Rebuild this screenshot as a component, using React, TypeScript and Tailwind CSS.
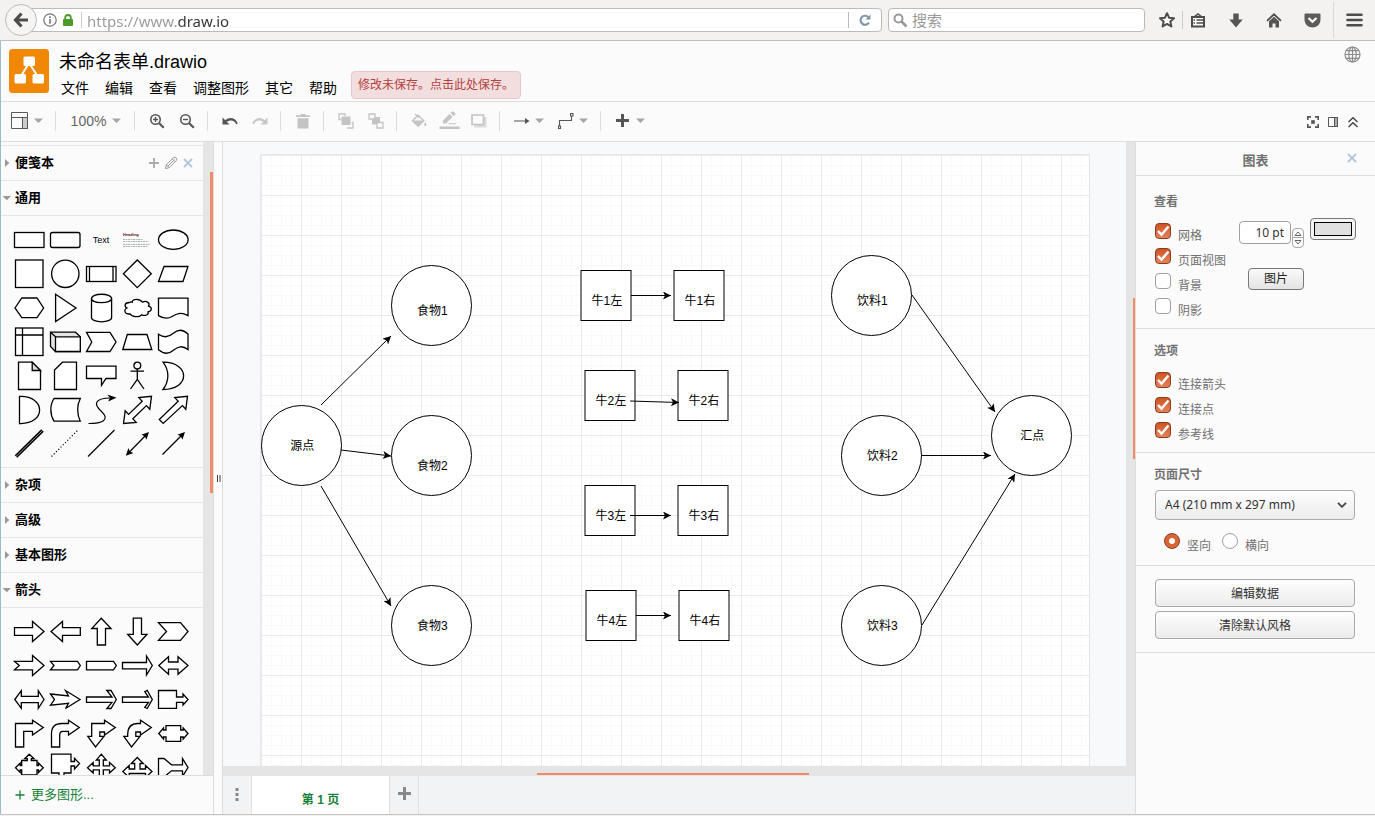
import type { ReactNode } from "react";

const SHAPE = { fill: "#fff", stroke: "#000", strokeWidth: 1.3 } as const;

type ShapeDef = { name: string; art: ReactNode };

const poly = (name: string, points: string): ShapeDef => ({
  name,
  art: <polygon points={points} {...SHAPE} />,
});
const path = (name: string, d: string): ShapeDef => ({ name, art: <path d={d} {...SHAPE} /> });

const generalShapes: ShapeDef[] = [
  { name: "矩形", art: <rect x="3.5" y="9.5" width="29.5" height="15" {...SHAPE} /> },
  { name: "圆角矩形", art: <rect x="3.5" y="9.5" width="29.5" height="15" rx="2" {...SHAPE} /> },
  {
    name: "文本",
    art: (
      <text x="18" y="20" textAnchor="middle" fontSize="9" fill="#000">
        Text
      </text>
    ),
  },
  {
    name: "标题",
    art: (
      <g>
        <text x="4" y="12.5" fontSize="4" fontWeight="bold" fill="#5a1010">
          Heading
        </text>
        <g stroke="#75857e" strokeWidth="0.6" strokeDasharray="2.4 0.7 1.4 0.5">
          <path d="M4 16.5H24" />
          <path d="M4 18.5H29.5" />
          <path d="M4 21.5H30.5" />
          <path d="M4 23.5H29" />
        </g>
      </g>
    ),
  },
  { name: "椭圆", art: <ellipse cx="18.3" cy="16.7" rx="14.8" ry="9.7" {...SHAPE} /> },
  { name: "正方形", art: <rect x="4.5" y="3" width="27.5" height="27.5" {...SHAPE} /> },
  { name: "圆形", art: <circle cx="18.3" cy="16.8" r="13.7" {...SHAPE} /> },
  {
    name: "过程",
    art: (
      <g {...SHAPE}>
        <rect x="3.5" y="9.5" width="29.5" height="15" />
        <path d="M6.5 9.5V24.5M30 9.5V24.5" />
      </g>
    ),
  },
  poly("菱形", "18.3,3 32.3,16.8 18.3,30.6 4.4,16.8"),
  poly("平行四边形", "9,9.5 33,9.5 28,24.5 3.5,24.5"),
  poly("六边形", "4,17 10.8,7 26,7 32.6,17 26,26.6 10.8,26.6"),
  poly("三角形", "8.6,3.2 29,17 8.6,30.5"),
  {
    name: "圆柱体",
    art: (
      <g {...SHAPE}>
        <path d="M8.5 7.5C8.5 1.8 28.6 1.8 28.6 7.5V26.5C28.6 32.2 8.5 32.2 8.5 26.5Z" />
        <path d="M8.5 7.5C8.5 13 28.6 13 28.6 7.5" fill="none" />
      </g>
    ),
  },
  path(
    "云",
    "M10.5 11.5C6 11.500 4.500 15 8 17C4 18.500 6 24 11 22.800C13 26.500 20.500 26.500 22.500 23.800C26.500 25.500 30 23.500 29 21C33.500 20 33 16 29.500 15.200C31.500 11.500 27 9.300 23.500 11.200C20.500 7.300 13.500 7.500 13.200 11.200C12.400 10.800 11.300 11 10.500 11.500Z",
  ),
  path("文档", "M3.5 7.200H33V24.600C25.500 20.500 21 23 17.500 25.200C13.500 27.800 8 27.500 3.500 24.600Z"),
  {
    name: "内部存储",
    art: (
      <g {...SHAPE}>
        <rect x="4.5" y="3" width="27.5" height="27.5" />
        <path d="M11.5 3V30.500M4.500 10H32" />
      </g>
    ),
  },
  {
    name: "立方体",
    art: (
      <g {...SHAPE}>
        <path d="M3.500 7.200H28.500L33.300 11.800V26.500H8.500L3.500 21.500Z" fill="#e4e4e4" />
        <path d="M8.500 11.800H33.300V26.500H8.500ZM3.500 7.200L8.500 11.800" />
      </g>
    ),
  },
  poly("步骤", "3.5,7.4 27,7.4 33,17 27,26.5 3.5,26.5 8.8,17"),
  poly("梯形", "3.8,24.5 8.3,9.5 28,9.5 32.8,24.5"),
  path("磁带", "M3.500 9.300C9 13 13.500 12.500 18 8.600C23 4 28 4.200 33 9V24.600C27 20 23 21.500 18 25.500C13.500 29.500 8 28.500 3.500 24.800Z"),
  {
    name: "便签",
    art: (
      <g {...SHAPE}>
        <path d="M7.500 3.200H21.200L29.500 11.500V30.500H7.500Z" />
        <path d="M21.200 3.200V11.500H29.500Z" fill="#ddd" />
      </g>
    ),
  },
  poly("卡片", "15.5,3.2 29.5,3.2 29.5,30.5 7.5,30.5 7.5,11"),
  poly("标注", "3.5,7.2 33,7.2 33,19.5 23,19.5 18.5,26.3 18.5,19.5 3.5,19.5"),
  {
    name: "角色",
    art: (
      <g {...SHAPE} fill="none">
        <circle cx="18.3" cy="6.600" r="3.400" />
        <path d="M18.300 10V20.300M11.500 12.200H25M18.300 20.300L11.500 30M18.300 20.300L25 30" />
      </g>
    ),
  },
  path("或", "M8 3.200C35.500 3.200 35.500 30.500 8 30.500C14.500 22 14.500 11.500 8 3.200Z"),
  path("与", "M8.500 3.500C35.300 2.500 35.300 31.500 8.500 30.500Z"),
  path("数据存储", "M7 5.500H33.300C29.800 12 29.800 21.500 33.300 28.200H7C2.800 21.500 2.800 12 7 5.500Z"),
  {
    name: "曲线",
    art: (
      <g stroke="#000" strokeWidth="1.2">
        <path d="M5.500 30.500C19 30.500 27.500 27 18.500 18.500C10 11 12 5.200 27 5" fill="none" />
        <path d="M32 4.800L26.500 7.200L27.700 4.900L26 2.800Z" />
      </g>
    ),
  },
  poly(
    "双向箭头",
    "32.5,3.3 30.8,16.2 27.4,12.6 13.8,25.8 17.2,29.4 4.5,30.5 6.2,17.8 9.6,21.4 23.2,8.2 19.8,4.600",
  ),
  poly("箭头", "32.500,3.300 30.800,16.200 27.400,12.600 8.200,30.400 4.300,26.500 23.200,8.200 19.800,4.600"),
  {
    name: "链接",
    art: (
      <g>
        <path d="M5 29.500L31.500 3.500" stroke="#000" strokeWidth="3.600" />
        <path d="M5 29.500L31.500 3.500" stroke="#aaa" strokeWidth="0.900" />
      </g>
    ),
  },
  {
    name: "点线",
    art: <path d="M4.500 29.500L31 3" stroke="#000" strokeWidth="1.200" strokeDasharray="1.200 2" />,
  },
  { name: "直线", art: <path d="M5 29.500L31.500 3" stroke="#000" strokeWidth="1.200" /> },
  {
    name: "双向连接线",
    art: (
      <g stroke="#000" strokeWidth="1.200">
        <path d="M9 26.500L28 7" />
        <path d="M29 6L27.300 11L26.300 8.700L24 7.700ZM7.800 27.700L9.500 22.700L10.500 25L12.800 26Z" />
      </g>
    ),
  },
  {
    name: "连接线",
    art: (
      <g stroke="#000" strokeWidth="1.200">
        <path d="M7.500 27.500L28 7" />
        <path d="M29 6L27.300 11L26.300 8.700L24 7.700Z" />
      </g>
    ),
  },
];

const arrowShapes: ShapeDef[] = [
  poly("右箭头", "3.500,12.600 21.500,12.600 21.500,6.500 33,16.500 21.500,26.500 21.500,20.300 3.500,20.300"),
  poly("左箭头", "33.300,12.600 15.500,12.600 15.500,6.500 4,16.500 15.500,26.500 15.500,20.300 33.300,20.300"),
  poly("上箭头", "14.300,30 14.300,13.500 8.700,13.500 18.300,3.200 28,13.500 22.500,13.500 22.500,30"),
  poly("下箭头", "14.300,3.200 14.300,19.300 8.700,19.300 18.300,30 28,19.300 22.500,19.300 22.500,3.200"),
  poly("V形箭头", "3.500,7.600 25.500,7.600 33,16.500 25.500,25.300 3.500,25.300 11.500,16.500"),
  poly("凹口箭头", "3.500,12.300 21.500,12.300 21.500,6.500 33,16.500 21.500,26.500 21.500,20.800 3.500,20.800 8.300,16.500"),
  poly("细V形", "3.500,12.300 30.500,12.300 33.300,16.500 30.500,20.800 3.500,20.800 7,16.500"),
  poly("五边形", "3.500,12.300 30.500,12.300 33.300,16.500 30.500,20.800 3.500,20.800"),
  poly("尖箭头", "3.500,13.500 27.500,13.500 27.500,7 33.300,16.500 27.500,26 27.500,19.800 3.500,19.800"),
  poly("左右箭头", "3.800,16.500 13.500,7.700 13.500,13 23,13 23,7.700 33,16.500 23,25.300 23,20.200 13.500,20.200 13.500,25.300"),
  poly("细左右箭头", "3.800,16.500 10.300,7.700 10.300,13.300 27.300,13.300 27.300,7.700 33,16.500 27.300,25.300 27.300,19.700 10.300,19.700 10.300,25.300"),
  poly("倒刺箭头", "3.500,11 21.500,13 18.500,7.500 33,16.500 18.500,25.500 21.500,20.300 3.500,22.200 7.500,16.500"),
  poly("开口箭头", "3.500,14 29,14 23.800,7.500 28,7.500 33.300,16.500 28,25.500 23.800,25.500 29,19.300 3.500,19.300"),
  poly("窄开口箭头", "3.500,14 29.500,14 25.800,8.800 28.200,7.500 33.300,16.500 28.200,25.500 25.800,24.300 29.500,19.300 3.500,19.300"),
  poly("右箭头标注", "3.500,7.500 21.500,7.500 21.500,14 28,14 28,11 33,16.500 28,22 28,19.300 21.500,19.300 21.500,25.300 3.500,25.300"),
  poly("折弯箭头", "4.500,30 4.500,6.500 21.500,6.500 21.500,3.300 32.300,10.500 21.500,18 21.500,14.300 12.700,14.300 12.700,30"),
  path("圆弧箭头", "M4.500 30V17Q4.500 6.500 15 6.500H21.500V3.300L32.300 10.500L21.500 18V14.300H16Q12.700 14.300 12.700 18V30Z"),
  poly("双折弯箭头", "8.700,6.500 21.500,6.500 21.500,3.300 32.300,10.500 21.500,18 21.500,15 16.800,15 16.800,19.300 21,19.300 12.500,30 4.800,19.300 8.700,19.300"),
  path("双圆弧箭头", "M8.700 19.300V17Q9 6.500 19 6.500H21.500V3.300L32.300 10.500L21.500 18V15H16.800V19.300H21L12.500 30L4.800 19.300Z"),
  path("左右箭头标注", "M3.800 16.500L8.500 11V13H11V8.700H25.700V13H28.200V11L33 16.500L28.200 22V20H25.700V24.300H11V20H8.500V22Z"),
  poly("四向箭头标注", "18.300,3.200 23,7.700 20.300,7.700 20.300,9.500 26,9.500 26,14.500 27.500,14.500 27.500,12 32.300,16.800 27.500,21.500 27.500,19 26,19 26,24 10.700,24 10.700,19 9.200,19 9.200,21.500 4.500,16.800 9.200,12 9.200,14.500 10.700,14.500 10.700,9.500 16.300,9.500 16.300,7.700 13.700,7.700"),
  poly("双箭头标注", "4.500,3.200 24,3.200 24,10.500 27.500,10.500 27.500,7.300 32.500,12.500 27.500,18 27.500,15 24,15 24,22 17,22 17,26 19,26 14.500,31 10,26 12,26 12,22 4.500,22"),
  poly("四向箭头", "18.300,3.200 23.300,9 20.300,9 20.300,14.800 26.500,14.800 26.500,11.500 32.300,16.800 26.500,22 26.500,18.800 20.300,18.800 20.300,25 23.300,25 18.300,30.500 13.300,25 16.300,25 16.300,18.800 10.200,18.800 10.200,22 4.500,16.800 10.200,11.500 10.200,14.800 16.300,14.800 16.300,9 13.300,9"),
  poly("三向箭头", "18.300,6.500 24.300,12.500 21,12.500 21,18 26.500,18 26.500,14.500 33,20.500 26.500,26.500 26.500,22.500 10.200,22.500 10.200,26.500 3.800,20.500 10.200,14.500 10.200,18 15.700,18 15.700,12.500 12.300,12.500"),
  poly("合并箭头", "3.500,7.500 9,7.500 16.500,13.800 27.500,13.800 27.500,7.500 33,16.500 27.500,25.500 27.500,19.800 16.500,19.800 9,26 3.500,26"),
];

function Palette({ items }: { items: ShapeDef[] }) {
  return (
    <div className="grid grid-cols-[repeat(5,36px)] border-b border-[#e5e5e5] pt-[7px] pb-1.5 pl-2.5">
      {items.map((s) => (
        <button key={s.name} type="button" aria-label={s.name} className="h-[34px] w-9">
          <svg viewBox="0 0 36 34" className="h-[34px] w-9">
            {s.art}
          </svg>
        </button>
      ))}
    </div>
  );
}

function SectionTitle({ label, open, children }: { label: string; open?: boolean; children?: ReactNode }) {
  return (
    <div className="flex h-[35px] items-center border-b border-[#e5e5e5] pr-[9px]">
      <button type="button" aria-expanded={!!open} className="flex flex-1 items-center text-[13px] font-bold">
        <svg viewBox="0 0 14 10" className="h-2.5 w-3.5" fill="#999">
          {open ? <path d="M1.500 3H10L5.750 7.200Z" /> : <path d="M4 1L8.300 5L4 9Z" />}
        </svg>
        {label}
      </button>
      {children}
    </div>
  );
}

function Sidebar() {
  return (
    <aside className="flex w-[213px] shrink-0 flex-col border-r border-[#ddd]">
      <div className="flex min-h-0 flex-1">
        <div className="flex-1 overflow-hidden pt-[3px]">
          <div className="border-t border-[#e5e5e5]">
            <SectionTitle label="便笺本">
              <div className="flex items-center gap-1">
                <button type="button" aria-label="添加">
                  <svg viewBox="0 0 12 12" className="size-3" stroke="#aaa" strokeWidth="1.800">
                    <path d="M6 1V11M1 6H11" />
                  </svg>
                </button>
                <button type="button" aria-label="编辑便笺">
                  <svg viewBox="0 0 14 14" className="size-3.5" fill="none" stroke="#999" strokeWidth="1">
                    <path d="M1.500 12.500L2.300 8.800L9.500 1.700Q11 .8 12.300 2Q13.200 3.300 12.300 4.500L5.200 11.700ZM2.300 8.800L5.200 11.700M8.300 3L11 5.800M4 10L10.500 3.500" />
                  </svg>
                </button>
                <button type="button" aria-label="关闭便笺">
                  <svg viewBox="0 0 12 12" className="size-3" stroke="#b4c7de" strokeWidth="2">
                    <path d="M2 2L10 10M10 2L2 10" />
                  </svg>
                </button>
              </div>
            </SectionTitle>
            <SectionTitle label="通用" open />
            <Palette items={generalShapes} />
            <SectionTitle label="杂项" />
            <SectionTitle label="高级" />
            <SectionTitle label="基本图形" />
            <SectionTitle label="箭头" open />
            <Palette items={arrowShapes} />
          </div>
        </div>
        <div className="w-2.5 bg-[#e5e5e5] pt-[30px] pl-[7px]">
          <div className="h-[321px] w-[3px] bg-[#f08c66]" />
        </div>
      </div>
      <div className="flex h-[39px] shrink-0 items-center border-t border-[#ddd] pl-3.5">
        <button type="button" className="flex items-center gap-1.5 text-[13px] text-[#188038]">
          <svg viewBox="0 0 10 10" className="size-2.5" stroke="#188038" strokeWidth="1.300">
            <path d="M5 .5V9.500M.5 5H9.500" />
          </svg>
          更多图形...
        </button>
      </div>
    </aside>
  );
}

/* ---------- diagram ---------- */

type DiagramNode = { label: string; kind: "circle" | "square"; x: number; y: number; tx?: number; ty?: number };

const nodes: DiagramNode[] = [
  { label: "源点", kind: "circle", x: 0, y: 250 },
  { label: "食物1", kind: "circle", x: 130, y: 110, ty: 5 },
  { label: "食物2", kind: "circle", x: 130, y: 260, ty: 10 },
  { label: "食物3", kind: "circle", x: 130, y: 430 },
  { label: "牛1左", kind: "square", x: 319.5, y: 115, ty: 5 },
  { label: "牛1右", kind: "square", x: 412.5, y: 115, ty: 5 },
  { label: "牛2左", kind: "square", x: 323.5, y: 215, ty: 5 },
  { label: "牛2右", kind: "square", x: 416.5, y: 215, ty: 5 },
  { label: "牛3左", kind: "square", x: 323.5, y: 330, ty: 5 },
  { label: "牛3右", kind: "square", x: 416.5, y: 330, ty: 5 },
  { label: "牛4左", kind: "square", x: 324.5, y: 435, ty: 5 },
  { label: "牛4右", kind: "square", x: 417.5, y: 435, ty: 5 },
  { label: "饮料1", kind: "circle", x: 570, y: 100, ty: 5 },
  { label: "饮料2", kind: "circle", x: 580, y: 260 },
  { label: "饮料3", kind: "circle", x: 580, y: 430 },
  { label: "汇点", kind: "circle", x: 730, y: 240 },
];

const edges: [number, number, number, number][] = [
  [60, 250, 130, 181],
  [80, 295, 130, 301],
  [60, 331, 130, 451],
  [370, 140.5, 410, 140.5],
  [369, 246, 418, 247.5],
  [369, 360.5, 410, 360.5],
  [375, 460.5, 410, 460.5],
  [651, 140, 734, 257],
  [660, 300.5, 730, 300.5],
  [661, 470, 754, 319],
];

function Diagram() {
  return (
    <svg viewBox="0 0 828 620" className="h-[620px] w-[828px]" role="img" aria-label="流程图">
      <defs>
        <marker id="head" viewBox="0 0 9 8" refX="8.500" refY="4" markerWidth="9" markerHeight="8" orient="auto" markerUnits="userSpaceOnUse">
          <path d="M8.500 4L.5 8L2.500 4L.5 0Z" />
        </marker>
      </defs>
      {nodes.map((n) => {
        const size = n.kind === "circle" ? 80 : 50;
        const cx = n.x + size / 2 + 0.5;
        const cy = n.y + size / 2 + 0.5;
        return (
          <g key={n.label}>
            {n.kind === "circle" ? (
              <circle cx={cx} cy={cy} r={40} fill="#fff" stroke="#000" />
            ) : (
              <rect x={n.x + 0.5} y={n.y + 0.5} width={50} height={50} fill="#fff" stroke="#000" />
            )}
            <text x={cx + 0.8} y={cy + 4.5 + (n.ty ?? 0)} textAnchor="middle" fontSize="12" fill="#000">
              {n.label}
            </text>
          </g>
        );
      })}
      {edges.map(([x1, y1, x2, y2]) => (
        <line key={`${x1}-${y1}-${y2}`} x1={x1} y1={y1} x2={x2} y2={y2} stroke="#000" markerEnd="url(#head)" />
      ))}
    </svg>
  );
}

function Workspace() {
  return (
    <main className="flex min-w-0 flex-1 flex-col border-l border-[#ddd]">
      <div className="flex min-h-0 flex-1">
        <div className="flex min-w-0 flex-1 overflow-hidden bg-[#f8f9fb] pt-3 pl-[37px]">
          <div className="w-[830px] shrink-0 overflow-hidden border border-b-0 border-[#e6e6e8] bg-white bg-[linear-gradient(#ebebeb_1px,transparent_1px),linear-gradient(90deg,#ebebeb_1px,transparent_1px),linear-gradient(#f9f9f9_1px,transparent_1px),linear-gradient(90deg,#f9f9f9_1px,transparent_1px)] [background-size:40px_40px,40px_40px,10px_10px,10px_10px]">
            <Diagram />
          </div>
        </div>
        <div className="flex w-[9px] justify-end bg-[#e5e5e5] pt-[156px]">
          <div className="h-[161px] w-0.5 bg-[#f08c66]" />
        </div>
      </div>
      <div className="flex h-2.5 shrink-0 items-end bg-[#e5e5e5] pb-px pl-[314px]">
        <div className="h-0.5 w-[272px] bg-[#f08c66]" />
      </div>
      <div className="flex h-[38px] shrink-0 bg-[#f1f3f4]">
        <button type="button" aria-label="页面菜单" className="flex w-[29px] items-center justify-center border-r border-[#e0e0e0]">
          <svg viewBox="0 0 4 14" className="h-3.5 w-1" fill="#888">
            <path d="M.5 0h3v3h-3zM.5 5h3v3h-3zM.5 10h3v3h-3z" />
          </svg>
        </button>
        <button type="button" className="w-[138px] border-r border-[#e0e0e0] bg-white pt-2.5 text-xs font-bold text-[#188038]">
          第 1 页
        </button>
        <button type="button" aria-label="添加页面" className="flex w-[29px] items-center justify-center border-r border-[#e0e0e0] pb-1">
          <svg viewBox="0 0 13 13" className="size-[13px]" stroke="#888" strokeWidth="3">
            <path d="M6.500 0V13M0 6.500H13" />
          </svg>
        </button>
      </div>
    </main>
  );
}

/* ---------- format panel ---------- */

function CheckRow({ label, checked }: { label: string; checked?: boolean }) {
  return (
    <label className="flex h-[25px] gap-[7px] text-xs text-[#707070]">
      <span className="grid size-4 shrink-0">
        <input
          type="checkbox"
          defaultChecked={checked}
          className="peer col-start-1 row-start-1 size-4 appearance-none rounded border border-[#a0a0a0] bg-white checked:border-[#8c3c1e] checked:bg-linear-to-b checked:from-[#cf5320] checked:to-[#e58159]"
        />
        <svg viewBox="0 0 16 16" className="invisible col-start-1 row-start-1 size-4 peer-checked:visible" fill="none" stroke="#fff" strokeWidth="2.500">
          <path d="M3 8L6.500 11.700L13.500 3.500" />
        </svg>
      </span>
      <span className="pt-1 leading-[18px]">{label}</span>
    </label>
  );
}

function RadioRow({ label, checked }: { label: string; checked?: boolean }) {
  return (
    <label className="flex gap-[7px] text-xs text-[#707070]">
      <input
        type="radio"
        name="orientation"
        defaultChecked={checked}
        className="size-4 appearance-none rounded-full border border-[#a0a0a0] bg-white checked:border-[#8c3c1e] checked:bg-[radial-gradient(circle,#fff_2.500px,#d96438_3.500px)]"
      />
      <span className="pt-1 leading-[18px]">{label}</span>
    </label>
  );
}

const panelButton = "rounded border border-[#aaa] bg-linear-to-b from-[#fefefe] to-[#ececec] pt-0.5 text-xs text-[#333]";

function FormatPanel() {
  return (
    <aside className="w-60 shrink-0 border-l border-[#ddd] text-[#707070]">
      <div className="flex h-[34px] items-center border-b border-[#ddd] pr-[17px] pl-[29px]">
        <h2 className="flex-1 pt-1 text-center text-[13px] font-bold">图表</h2>
        <button type="button" aria-label="关闭" className="pb-0.5">
          <svg viewBox="0 0 12 12" className="size-3" stroke="#b4c7de" strokeWidth="2">
            <path d="M2 2L10 10M10 2L2 10" />
          </svg>
        </button>
      </div>
      <section className="h-[153px] border-b border-[#ddd] px-[18px] pt-[17px]">
        <h3 className="text-xs leading-[18px] font-bold">查看</h3>
        <div className="flex justify-between pt-3">
          <div className="pl-px">
            <CheckRow label="网格" checked />
            <CheckRow label="页面视图" checked />
            <CheckRow label="背景" />
            <CheckRow label="阴影" />
          </div>
          <div className="-mt-[5px] mr-px flex flex-col gap-5">
            <div className="flex">
              <input
                aria-label="网格大小"
                defaultValue="10 pt"
                className="mt-[3px] mr-px h-[23px] w-[52px] rounded border border-[#a0a0a0] bg-white pr-1.5 text-right font-['Noto_Sans'] text-xs text-[#333]"
              />
              <span className="mt-2.5 mr-1.5 flex h-5 w-3 flex-col rounded-sm border border-[#aaa]">
                <button type="button" aria-label="增大" className="flex h-[9px] items-center justify-center border-b border-[#aaa]">
                  <svg viewBox="0 0 8 5" className="h-[5px] w-2" fill="#fff" stroke="#666">
                    <path d="M1 4.500L4 1L7 4.500Z" />
                  </svg>
                </button>
                <button type="button" aria-label="减小" className="flex h-[9px] items-center justify-center">
                  <svg viewBox="0 0 8 5" className="h-[5px] w-2" fill="#fff" stroke="#666">
                    <path d="M1 .5L4 4L7 .5Z" />
                  </svg>
                </button>
              </span>
              <button type="button" aria-label="网格颜色" className="h-[22px] w-[46px] rounded border border-[#777] bg-[#f4f4f4] p-[3px]">
                <span className="block h-full border border-black bg-[#e0e0e0]" />
              </button>
            </div>
            <button type="button" className="ml-[9px] h-[22px] w-14 rounded border border-[#777] bg-linear-to-b from-[#fafafa] to-[#e4e4e4] text-xs text-[#222]">
              图片
            </button>
          </div>
        </div>
      </section>
      <section className="h-[124px] border-b border-[#ddd] pt-[13px] pl-[18px]">
        <h3 className="text-xs leading-[18px] font-bold">选项</h3>
        <div className="pt-3 pl-px">
          <CheckRow label="连接箭头" checked />
          <CheckRow label="连接点" checked />
          <CheckRow label="参考线" checked />
        </div>
      </section>
      <section className="h-[113px] border-b border-[#ddd] pt-[13px] pr-5 pl-[18px]">
        <h3 className="text-xs leading-[18px] font-bold">页面尺寸</h3>
        <div className="mt-1.5 ml-px grid items-center">
          <select
            aria-label="页面尺寸"
            className="col-start-1 row-start-1 h-[30px] appearance-none rounded border border-[#aaa] bg-linear-to-b from-[#fefefe] to-[#ececec] pl-[9px] font-['Noto_Sans'] text-xs text-[#333]"
          >
            <option>A4 (210 mm x 297 mm)</option>
          </select>
          <svg viewBox="0 0 10 6" className="pointer-events-none col-start-1 row-start-1 mr-2 h-1.5 w-2.5 justify-self-end" fill="none" stroke="#444" strokeWidth="1.800">
            <path d="M1 .8L5 4.800L9 .8" />
          </svg>
        </div>
        <div className="flex gap-[11px] pt-[13px] pl-2.5">
          <RadioRow label="竖向" checked />
          <RadioRow label="横向" />
        </div>
      </section>
      <section className="flex h-[87px] flex-col gap-1 border-b border-[#ddd] pt-[13px] pr-5 pl-[19px]">
        <button type="button" className={`h-7 ${panelButton}`}>
          编辑数据
        </button>
        <button type="button" className={`h-7 ${panelButton}`}>
          清除默认风格
        </button>
      </section>
    </aside>
  );
}

/* ---------- toolbar ---------- */

function Sep() {
  return <span className="h-5 w-px bg-[#ddd]" />;
}

function Group({ children }: { children: ReactNode }) {
  return <div className="flex pr-[5px] pl-[7px]">{children}</div>;
}

function Caret() {
  return (
    <svg viewBox="0 0 9 5" className="h-[5px] w-[9px]" fill="#a6a6a6">
      <path d="M0 .5H9L4.500 5Z" />
    </svg>
  );
}

function Tool({ label, children }: { label: string; children: ReactNode }) {
  return (
    <button type="button" aria-label={label} className="flex h-7 w-[30px] items-center justify-center">
      {children}
    </button>
  );
}

const icon = "size-4";

function Toolbar() {
  return (
    <div className="flex h-10 shrink-0 items-center border-b border-[#ddd] pb-0.5 text-[#555]">
      <Group>
        <button type="button" aria-label="视图" className="flex h-7 w-[42px] items-center gap-1.5 pl-[3px]">
          <svg viewBox="0 0 17 17" className="size-[17px]" fill="none" stroke="#5a5a5a">
            <path d="M11.500 5.500H16.500V16.500H11.500Z" fill="#ccc" />
            <path d="M.5 .5H16.500V16.500H.5ZM.5 5.500H16.500" />
          </svg>
          <Caret />
        </button>
      </Group>
      <Sep />
      <Group>
        <button type="button" className="flex h-7 w-[66px] items-center justify-center gap-1.5 text-sm text-[#666]">
          100%
          <Caret />
        </button>
      </Group>
      <Sep />
      <Group>
        <Tool label="放大">
          <svg viewBox="0 0 16 16" className={icon} fill="none" stroke="#555" strokeWidth="1.600">
            <circle cx="6.500" cy="6.500" r="4.700" />
            <path d="M10.200 10.200L14.800 14.800" strokeWidth="2.200" />
            <path d="M6.500 4V9M4 6.500H9" strokeWidth="1.400" />
          </svg>
        </Tool>
        <Tool label="缩小">
          <svg viewBox="0 0 16 16" className={icon} fill="none" stroke="#555" strokeWidth="1.600">
            <circle cx="6.500" cy="6.500" r="4.700" />
            <path d="M10.200 10.200L14.800 14.800" strokeWidth="2.200" />
            <path d="M4 6.500H9" strokeWidth="1.400" />
          </svg>
        </Tool>
      </Group>
      <Sep />
      <Group>
        <Tool label="撤销">
          <svg viewBox="0 0 16 16" className={icon} fill="#555">
            <path d="M.5 4.500V11.500H7.500L4.900 8.900C7.500 6.800 12 6.500 14.200 11.200L15.800 10.500C13.500 4.500 7.300 3.500 3.300 7.200Z" />
          </svg>
        </Tool>
        <Tool label="重做">
          <svg viewBox="0 0 16 16" className={icon} fill="#c8c8c8">
            <path d="M15.500 4.500V11.500H8.500L11.100 8.900C8.500 6.800 4 6.500 1.800 11.200L.2 10.500C2.500 4.500 8.700 3.500 12.700 7.200Z" />
          </svg>
        </Tool>
      </Group>
      <Sep />
      <Group>
        <Tool label="删除">
          <svg viewBox="0 0 16 16" className={icon} fill="#c4c4c4">
            <path d="M1 2.200H5L6 1H10L11 2.200H15V4H1ZM2.500 5.300H13.500V15.500H2.500Z" />
          </svg>
        </Tool>
      </Group>
      <Sep />
      <Group>
        <Tool label="移至最前">
          <svg viewBox="0 0 16 16" className={icon} fill="none" stroke="#c4c4c4" strokeWidth="1.300">
            <path d="M3.500 6.500H1V1H7V3M9 15H15V9.500H13.500" />
            <path d="M3.500 3.500H12.500V12H3.500Z" fill="#c4c4c4" stroke="none" />
          </svg>
        </Tool>
        <Tool label="移至最后">
          <svg viewBox="0 0 16 16" className={icon} fill="none" stroke="#c4c4c4" strokeWidth="1.300">
            <path d="M4 4H12V11.500H4Z" fill="#c4c4c4" stroke="none" />
            <path d="M1 1H7V6H1ZM9 9.500H15V15H9Z" fill="#fbfbfb" />
          </svg>
        </Tool>
      </Group>
      <Sep />
      <Group>
        <Tool label="填充颜色">
          <svg viewBox="0 0 16 16" className={icon} fill="none" stroke="#c4c4c4" strokeWidth="1.500">
            <path d="M4 1L8 4.500M1.500 7.800L7.200 2.300L12.700 7.800L7.200 13.200Z" />
            <path d="M1.500 7.500H12.700L7.200 13.200Z" fill="#c4c4c4" stroke="none" />
            <path d="M14.200 9Q16.500 13 14.200 13Q12 13 14.200 9Z" fill="#c4c4c4" stroke="none" />
          </svg>
        </Tool>
        <Tool label="线条颜色">
          <svg viewBox="0 0 21 19" className="h-[19px] w-[21px]" fill="#c4c4c4">
            <path d="M4 9.500L10.500 3L13.500 6L7 12.500H4ZM11.500 2L13 .5Q14 0 15 1L16 2Q16.800 3 16 3.800L14.600 5.100ZM9.500 12.200H17V13.200H9.500ZM.5 15.500H20.500V18H.5Z" />
          </svg>
        </Tool>
        <Tool label="阴影">
          <svg viewBox="0 0 16 14" className="h-3.5 w-4">
            <path d="M3 3H15.500V13.500H3Z" fill="#dcdcdc" />
            <path d="M1 1H12.500V10.500H1Z" fill="#fbfbfb" stroke="#c4c4c4" strokeWidth="1.700" />
          </svg>
        </Tool>
      </Group>
      <Sep />
      <Group>
        <button type="button" aria-label="连接" className="flex h-7 w-11 items-center justify-center gap-[5px]">
          <svg viewBox="0 0 16 16" className={icon} fill="#555">
            <path d="M0 7.500H11V5L15.500 8L11 11V8.500H0Z" />
          </svg>
          <Caret />
        </button>
        <button type="button" aria-label="航点" className="flex h-7 w-11 items-center justify-center gap-[5px]">
          <svg viewBox="0 0 16 16" className={icon} fill="none" stroke="#555">
            <path d="M.5 13H2.500V15.500H.5ZM12.500 .5H15V3H12.500ZM1.500 13V7.500H13.500V3" strokeWidth="1.100" />
          </svg>
          <Caret />
        </button>
      </Group>
      <Sep />
      <Group>
        <button type="button" aria-label="插入" className="flex h-7 w-11 items-center justify-center gap-[7px]">
          <svg viewBox="0 0 13 13" className="size-[13px]" stroke="#555" strokeWidth="3">
            <path d="M6.500 0V13M0 6.500H13" />
          </svg>
          <Caret />
        </button>
      </Group>
      <div className="ml-auto flex gap-2 pt-0.5 pr-4">
        <button type="button" aria-label="全屏">
          <svg viewBox="0 0 12 12" className="size-3" fill="none" stroke="#555" strokeWidth="1.700">
            <path d="M.8 4V.8H4M8 .8H11.200V4M11.200 8V11.200H8M4 11.200H.8V8" />
            <path d="M4.200 4.200H7.800V7.800H4.200Z" fill="#555" stroke="none" />
          </svg>
        </button>
        <button type="button" aria-label="格式面板">
          <svg viewBox="0 0 12 12" className="size-3" fill="none" stroke="#555">
            <path d="M7.500 1.500H10.500V10.500H7.500Z" fill="#aaa" />
            <path d="M1.500 1.500H10.500V10.500H1.500Z" />
          </svg>
        </button>
        <button type="button" aria-label="折叠">
          <svg viewBox="0 0 12 12" className="size-3" fill="none" stroke="#444" strokeWidth="1.400">
            <path d="M1.500 6L6 1.700L10.500 6M1.500 11L6 6.700L10.500 11" />
          </svg>
        </button>
      </div>
    </div>
  );
}

/* ---------- browser chrome ---------- */

function BrowserBar() {
  return (
    <div className="flex h-[41px] shrink-0 items-center border-b border-[#c0bebc] bg-[#f3f2f0] pl-[5px]">
      <button type="button" aria-label="后退" className="z-10 flex size-8 shrink-0 items-center justify-center rounded-full border border-[#bbb] bg-[#f6f5f4]">
        <svg viewBox="0 0 16 16" className="size-4" fill="none" stroke="#4c4c4c" strokeWidth="3.200">
          <path d="M8.500 1.500L2.500 8L8.500 14.500M3 8H15" />
        </svg>
      </button>
      <div className="-ml-2 flex h-6 min-w-0 flex-1 items-center rounded-r-sm border border-[#bbb] bg-white pl-[13px]">
        <svg viewBox="0 0 14 14" className="size-3.5 shrink-0" fill="none" stroke="#777" strokeWidth="1.200">
          <circle cx="7" cy="7" r="6.200" />
          <path d="M7 6V10.700M7 3.300V4.900" strokeWidth="1.600" />
        </svg>
        <svg viewBox="0 0 10 12" className="mr-2 ml-1.5 h-3 w-2.5 shrink-0">
          <path d="M2.200 6V3.500Q2.200 1 5 1Q7.800 1 7.800 3.500V6" fill="none" stroke="#4c9a2a" strokeWidth="1.800" />
          <rect y="5" width="10" height="7" rx="1" fill="#4c9a2a" />
        </svg>
        <span className="mr-[5px] h-4 w-px bg-[#ccc]" />
        <input
          aria-label="地址"
          defaultValue="https://www.draw.io"
          className="min-w-0 flex-1 bg-[linear-gradient(90deg,#999_91px,#333_91px)] bg-clip-text pt-0.5 font-['Noto_Sans'] text-[15px] leading-5 text-transparent outline-none"
        />
        <button type="button" aria-label="重新加载" className="flex h-4 w-[33px] items-center justify-center border-l border-[#bbb]">
          <svg viewBox="0 0 12 12" className="size-3" fill="none" stroke="#8095a8" strokeWidth="2.200">
            <path d="M10 8.500A4.500 4.500 0 1 1 9.200 3" />
            <path d="M11.500 .5V5.500H6.500Z" fill="#8095a8" stroke="none" />
          </svg>
        </button>
      </div>
      <label className="ml-1.5 flex h-6 w-[257px] shrink-0 items-center gap-1 rounded-sm border border-[#bbb] bg-white pl-1">
        <svg viewBox="0 0 15 15" className="size-[15px]" fill="none" stroke="#999" strokeWidth="2">
          <circle cx="5.500" cy="5.500" r="4" />
          <path d="M8.500 8.500L13.500 13.500" strokeWidth="2.600" />
        </svg>
        <input aria-label="搜索" placeholder="搜索" className="min-w-0 flex-1 pt-0.5 text-[15px] leading-5 outline-none placeholder:text-[#999]" />
      </label>
      <div className="flex shrink-0 items-center pl-3.5">
        <button type="button" aria-label="收藏">
          <svg viewBox="0 0 16 16" className="size-4" fill="#fff" stroke="#4c4c4c" strokeWidth="2" strokeLinejoin="round">
            <path d="M8 1.200L10 5.700L15 6.200L11.300 9.500L12.400 14.500L8 11.900L3.600 14.500L4.700 9.500L1 6.200L6 5.700Z" />
          </svg>
        </button>
        <span className="mr-2 ml-[7px] h-[18px] w-px bg-[#ccc]" />
        <button type="button" aria-label="书签">
          <svg viewBox="0 0 14 15" className="h-[15px] w-3.5" fill="none" stroke="#4c4c4c">
            <path d="M1 4H13V13.500H1Z" strokeWidth="2" fill="#fff" />
            <path d="M3.500 3.500L7 .8L10.500 3.500Z" strokeWidth="1.300" />
            <path d="M2.500 7H4M5.500 7H12M2.500 10H4M5.500 10H12" strokeWidth="1.500" />
          </svg>
        </button>
        <button type="button" aria-label="下载" className="ml-6">
          <svg viewBox="0 0 14 15" className="h-[15px] w-3.5" fill="#555">
            <path d="M4.300 .5H9.700V6.500H13.700L7 14.500L.3 6.500H4.300Z" />
          </svg>
        </button>
        <button type="button" aria-label="主页" className="ml-[23px]">
          <svg viewBox="0 0 16 15" className="h-[15px] w-4">
            <path d="M1 7.800L8 1.300L15 7.800" fill="none" stroke="#4c4c4c" strokeWidth="1.800" />
            <path d="M3 8.300L8 3.700L13 8.300V14.500H9.500V10.500H6.500V14.500H3Z" fill="#555" />
          </svg>
        </button>
        <button type="button" aria-label="Pocket" className="ml-[22px]">
          <svg viewBox="0 0 17 15" className="h-[15px] w-[17px]">
            <path d="M1.500 .5H15.500Q16.500 .5 16.500 1.500V6.500C16.500 11.500 12.500 14.500 8.500 14.500S.5 11.500 .5 6.500V1.500Q.5 .5 1.500 .5Z" fill="#5c5c5c" />
            <path d="M4.500 5L8.500 8.800L12.500 5" fill="none" stroke="#fff" strokeWidth="2.200" />
          </svg>
        </button>
        <span className="mr-3 ml-3 h-9 w-px bg-[#d8d8d8]" />
        <button type="button" aria-label="菜单" className="mr-3">
          <svg viewBox="0 0 17 14" className="h-3.5 w-[17px]" stroke="#4c4c4c" strokeWidth="2.600" strokeLinecap="round">
            <path d="M1.500 1.700H15.500M1.500 7H15.500M1.500 12.300H15.500" />
          </svg>
        </button>
      </div>
    </div>
  );
}

const menus = ["文件", "编辑", "查看", "调整图形", "其它", "帮助"];

function Header() {
  return (
    <header className="flex h-[61px] shrink-0 border-b border-[#ddd] pl-2">
      <svg viewBox="0 0 40 44" className="mt-2 h-11 w-10 shrink-0" aria-label="draw.io">
        <rect width="40" height="44" rx="3.500" fill="#f08705" />
        <path d="M20 14L12 27M20 14L28.500 27" stroke="#fff" strokeWidth="2" />
        <rect x="14.500" y="7.500" width="11.500" height="9.500" rx="1.500" fill="#fff" />
        <rect x="5.500" y="25" width="11.500" height="9.500" rx="1.500" fill="#fff" />
        <rect x="23.500" y="25" width="11.500" height="9.500" rx="1.500" fill="#fff" />
      </svg>
      <div className="pt-2 pl-2.5">
        <h1 className="text-lg leading-[26px]">未命名表单.drawio</h1>
        <div className="flex items-center">
          <nav className="flex gap-4 pt-0.5 pl-0.5 text-sm leading-5">
            {menus.map((m) => (
              <button key={m} type="button">
                {m}
              </button>
            ))}
          </nav>
          <button type="button" className="-mt-1 ml-3.5 h-7 rounded-sm border border-[#e9c6ca] bg-[#f2dede] px-1.5 text-xs text-[#b4413d]">
            修改未保存。点击此处保存。
          </button>
        </div>
      </div>
      <button type="button" aria-label="语言" className="mt-[5px] mr-3.5 ml-auto self-start">
        <svg viewBox="0 0 17 17" className="size-[17px]" fill="none" stroke="#8c8c8c" strokeWidth="1.200">
          <circle cx="8.500" cy="8.500" r="7.500" />
          <ellipse cx="8.500" cy="8.500" rx="3.700" ry="7.500" />
          <path d="M8.500 1V16M1 8.500H16M2.200 4.700H14.800M2.200 12.300H14.800" />
        </svg>
      </button>
    </header>
  );
}

export default function App() {
  return (
    <div className="flex h-screen flex-col overflow-hidden bg-[#fbfbfb] font-['Liberation_Sans','Noto_Sans_CJK_SC',sans-serif] text-black">
      <BrowserBar />
      <div className="flex min-h-0 flex-1 flex-col border-l border-l-[#9dbccb]">
        <Header />
        <Toolbar />
        <div className="flex min-h-0 flex-1">
          <Sidebar />
          <div className="flex w-2 shrink-0 items-center justify-end pr-px">
            <svg viewBox="0 0 4 7" className="h-[7px] w-1" stroke="#444">
              <path d="M.5 0V7M3 0V7" />
            </svg>
          </div>
          <Workspace />
          <FormatPanel />
        </div>
      </div>
      <div className="h-0.5 shrink-0 border-t border-[#c9c3bf] bg-[#f3f2f0]" />
    </div>
  );
}
